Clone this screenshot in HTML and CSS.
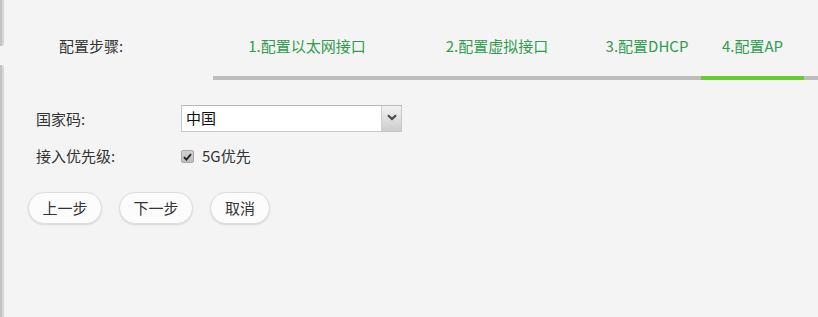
FILE: index.html
```html
<!DOCTYPE html>
<html lang="zh-CN">
<head>
<meta charset="utf-8">
<title>配置步骤</title>
<link rel="stylesheet" href="styles.css">
</head>
<body>
<div class="page">
  <div class="edge">
    <div class="edge-top"></div>
    <div class="edge-bottom"></div>
  </div>
  <div class="main">
    <div class="header">
      <div class="title">配置步骤:</div>
      <div class="steps">
        <div class="step s1">1.配置以太网接口</div>
        <div class="step s2">2.配置虚拟接口</div>
        <div class="step s3">3.配置DHCP</div>
        <div class="step s4 active">4.配置AP</div>
        <div class="step rest"></div>
      </div>
    </div>
    <div class="form">
      <div class="row row-select">
        <div class="label">国家码:</div>
        <div class="select">
          <span class="select-value">中国</span>
          <span class="select-btn">
            <svg width="10" height="7" viewBox="0 0 10 7"><path d="M1 1.2 L5 5 L9 1.2" fill="none" stroke="#4a4a4a" stroke-width="2.2"/></svg>
          </span>
        </div>
      </div>
      <div class="row row-check">
        <div class="label">接入优先级:</div>
        <div class="check">
          <span class="box">
            <svg width="9" height="8" viewBox="0 0 9 8"><path d="M1 4.2 L3.4 6.6 L8 1.2" fill="none" stroke="#222" stroke-width="1.8"/></svg>
          </span>
          <span class="check-text">5G优先</span>
        </div>
      </div>
    </div>
    <div class="buttons">
      <button class="btn">上一步</button>
      <button class="btn">下一步</button>
      <button class="btn btn-short">取消</button>
    </div>
  </div>
</div>
</body>
</html>
```
FILE: styles.css
```css
* { box-sizing: border-box; }
html, body {
  margin: 0;
  padding: 0;
  background: #f4f4f4;
}
body {
  font-family: "Noto Sans CJK SC", "Noto Sans", sans-serif;
  font-size: 15px;
  color: #333;
  width: 818px;
  height: 317px;
  overflow: hidden;
}
.page {
  display: flex;
  height: 317px;
}
.edge {
  width: 4px;
  display: flex;
  flex-direction: column;
  gap: 19px;
}
.edge-top, .edge-bottom {
  background: #d6d6d6;
  border-left: 2px solid #c4c4c4;
}
.edge-top {
  height: 46px;
  border-bottom-right-radius: 3px;
}
.edge-bottom {
  flex: 1;
  border-top-right-radius: 3px;
}
.main {
  flex: 1;
  display: flex;
  flex-direction: column;
}
.header {
  display: flex;
  padding-top: 36px;
}
.title {
  width: 209px;
  padding-left: 55px;
  line-height: 20px;
}
.steps {
  flex: 1;
  display: grid;
  grid-template-columns: 188px 192px 108px 103px 1fr;
}
.step {
  line-height: 20px;
  height: 44px;
  padding-bottom: 20px;
  border-bottom: 4px solid #bdbdbd;
  text-align: center;
  color: #2f9d4e;
  white-space: nowrap;
}
.step.active {
  border-bottom-color: #66cc33;
}
.form {
  padding-left: 32px;
  padding-top: 25px;
  display: flex;
  flex-direction: column;
  gap: 14px;
}
.row {
  display: flex;
  align-items: center;
}
.label {
  width: 145px;
  line-height: 20px;
}
.row-select .label { padding-top: 1px; }
.select {
  width: 221px;
  height: 27px;
  display: flex;
  align-items: stretch;
  background: #fff;
  border: 1px solid #c8c8c8;
  border-top-color: #b8b8b8;
}
.select-value {
  flex: 1;
  padding-left: 4px;
  line-height: 24px;
  color: #111;
}
.select-btn {
  width: 20px;
  border-left: 1px solid #cfcfcf;
  background: linear-gradient(#f2f2f2, #cdcdcd);
  display: flex;
  align-items: center;
  justify-content: center;
  padding-bottom: 3px;
}
.check {
  display: flex;
  align-items: center;
  height: 20px;
}
.box {
  width: 13px;
  height: 13px;
  border: 1px solid #a9a9a9;
  border-radius: 2px;
  background: linear-gradient(#d2d2d2, #bdbdbd);
  display: flex;
  align-items: center;
  justify-content: center;
  margin-top: 1px;
}
.check-text {
  margin-left: 8px;
  line-height: 20px;
}
.buttons {
  display: flex;
  gap: 17px;
  padding-left: 24px;
  margin-top: 26px;
}
.btn {
  font-family: inherit;
  font-size: 15px;
  color: #333;
  width: 74px;
  height: 32px;
  padding: 0;
  line-height: 20px;
  border: 1px solid #dedede;
  border-radius: 16px;
  background: #fcfcfc;
  box-shadow: 0 1px 2px rgba(0, 0, 0, 0.12);
  cursor: pointer;
}
.btn-short {
  width: 60px;
}
```
